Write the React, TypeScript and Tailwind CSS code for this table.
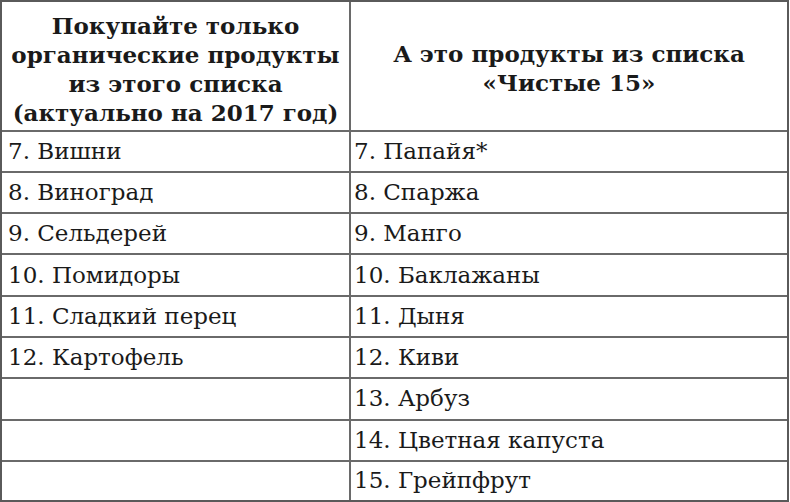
import React from "react";

const left = ["7. Вишни", "8. Виноград", "9. Сельдерей", "10. Помидоры", "11. Сладкий перец", "12. Картофель", "", "", ""];
const right = ["7. Папайя*", "8. Спаржа", "9. Манго", "10. Баклажаны", "11. Дыня", "12. Киви", "13. Арбуз", "14. Цветная капуста", "15. Грейпфрут"];

export default function App() {
  return (
    <div
      className="w-[790px] h-[502px] bg-white text-[#1a1a1a]"
      style={{ fontFamily: '"DejaVu Serif", serif' }}
    >
      <div className="w-[789px] h-[502px] border-2 border-[#5a5a5a] grid grid-cols-[349px_1fr] grid-rows-[129.5px_repeat(8,41.3px)_1fr]">
        <div className="border-r-2 border-b-2 border-[#6a6a6a] flex items-center justify-center text-center font-bold text-[23px] leading-[29px] pt-[6px]">
          Покупайте только
          <br />
          органические продукты
          <br />
          из этого списка
          <br />
          (актуально на 2017 год)
        </div>
        <div className="border-b-2 border-[#6a6a6a] flex items-center justify-center text-center font-bold text-[23px] leading-[29px] pt-[4px]">
          А это продукты из списка
          <br />
          «Чистые 15»
        </div>
        {right.map((r, i) => (
          <React.Fragment key={i}>
            <div
              className={`border-r-2 border-[#6a6a6a] ${i < 8 ? "border-b-2" : ""} flex items-center pl-[6px] text-[23px] leading-none`}
            >
              {left[i]}
            </div>
            <div
              className={`border-[#6a6a6a] ${i < 8 ? "border-b-2" : ""} flex items-center pl-[3px] text-[23px] leading-none`}
            >
              {r}
            </div>
          </React.Fragment>
        ))}
      </div>
    </div>
  );
}
